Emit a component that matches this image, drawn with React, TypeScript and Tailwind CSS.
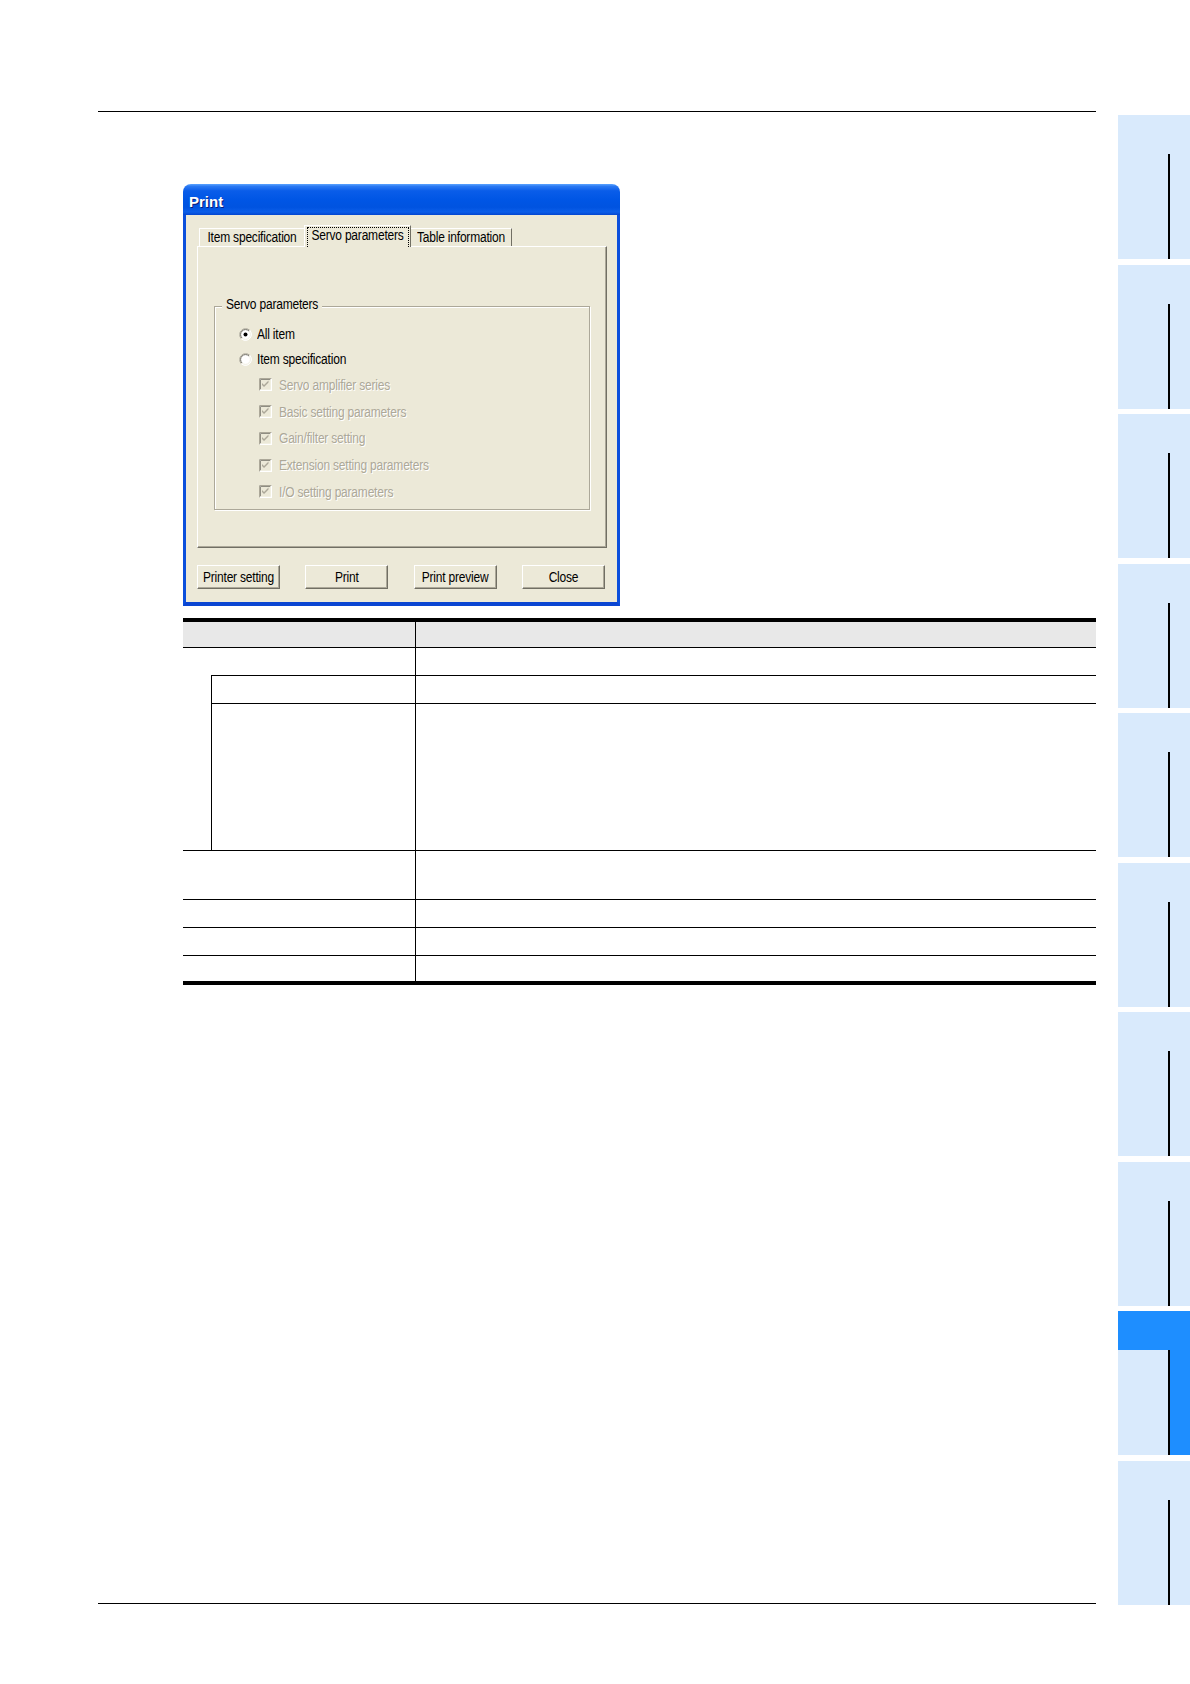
import React from "react";

const disabledText = "text-[#aca899] [text-shadow:1px_1px_0_#ffffff]";

function Label({ children, className = "" }: { children: React.ReactNode; className?: string }) {
  return (
    <span className={`inline-block origin-center scale-y-[1.15] whitespace-nowrap text-[12px] leading-[12px] tracking-[-0.2px] ${className}`}>
      {children}
    </span>
  );
}

function Radio({ checked }: { checked?: boolean }) {
  return (
    <svg width="13" height="13" viewBox="0 0 13 13" className="shrink-0">
      <circle cx="6.5" cy="6.5" r="6" fill="#ffffff" />
      <path d="M2.26 10.74 A6 6 0 0 1 10.74 2.26" stroke="#aca899" strokeWidth="1" fill="none" />
      <path d="M3.0 10.0 A4.95 4.95 0 0 1 10.0 3.0" stroke="#716f64" strokeWidth="1" fill="none" />
      <path d="M10.74 2.26 A6 6 0 0 1 2.26 10.74" stroke="#ffffff" strokeWidth="1" fill="none" />
      <path d="M10.0 3.0 A4.95 4.95 0 0 1 3.0 10.0" stroke="#f1efe2" strokeWidth="1" fill="none" />
      {checked && <circle cx="6.5" cy="6.5" r="2" fill="#000000" />}
    </svg>
  );
}

function DisabledCheck() {
  return (
    <svg width="13" height="13" viewBox="0 0 13 13" className="shrink-0">
      <rect x="0" y="0" width="13" height="13" fill="#ffffff" />
      <path d="M0.5 12.5 V0.5 H12.5" stroke="#aca899" strokeWidth="1" fill="none" />
      <path d="M1.5 11.5 V1.5 H11.5" stroke="#8f8d82" strokeWidth="1" fill="none" />
      <path d="M1.5 11.5 H11.5 V1.5" stroke="#f1efe2" strokeWidth="1" fill="none" />
      <rect x="2" y="2" width="9" height="9" fill="#ece9d8" />
      <polygon points="3,5 5,7 9.5,2.5 9.5,4.5 5,9 3,7" fill="#aca899" />
    </svg>
  );
}

function Button({ children }: { children: React.ReactNode }) {
  return (
    <div className="flex h-[24px] w-[83px] items-center justify-center border-t border-l border-t-white border-l-white border-r border-b border-r-[#716f64] border-b-[#716f64] bg-[#ece9d8] shadow-[inset_-1px_-1px_0_#aca899] text-black">
      <Label>{children}</Label>
    </div>
  );
}

function Dialog() {
  const items = [
    "Servo amplifier series",
    "Basic setting parameters",
    "Gain/filter setting",
    "Extension setting parameters",
    "I/O setting parameters",
  ];
  return (
    <div className="flex h-[422px] w-[437px] flex-col font-['Liberation_Sans',Arial,sans-serif]">
      {/* title bar */}
      <div className="flex h-[31px] shrink-0 items-start rounded-t-[8px] bg-[linear-gradient(180deg,#5aa3ff_0%,#2a78f2_8%,#0a5de9_22%,#0056e5_50%,#0053e0_75%,#0b5ee9_90%,#0346d0_100%)] pl-[6px] pt-[10px]">
        <span className="text-[15px] font-bold leading-[15px] text-white [text-shadow:1px_1px_0_#0a1e7a]">Print</span>
      </div>
      {/* body */}
      <div className="flex flex-1 flex-col border-x-[3px] border-b-[4px] border-x-[#0b4fdc] border-b-[#0a45d2] bg-[#ece9d8] pl-[11px] pr-[10px] pt-[10px]">
        {/* tab strip */}
        <div className="flex h-[21px] items-end pl-[2px]">
          <div className="flex h-[18px] w-[105px] justify-center border-t border-l border-t-white border-l-white bg-[#ece9d8] pt-[3px] text-black">
            <Label>Item specification</Label>
          </div>
          <div className="relative z-10 -mb-px flex h-[22px] w-[107px] flex-col border-t border-l border-r border-t-white border-l-white border-r-[#716f64] bg-[#ece9d8] px-[1.5px] pt-[1px]">
            <div className="flex flex-1 justify-center border border-b-0 border-dotted border-black pt-[1.5px] text-black">
              <Label>Servo parameters</Label>
            </div>
          </div>
          <div className="flex h-[18px] w-[101px] justify-center border-t border-r border-t-white border-r-[#716f64] bg-[#ece9d8] pt-[3px] text-black">
            <Label>Table information</Label>
          </div>
        </div>
        {/* tab panel */}
        <div className="h-[302px] border-t border-l border-t-white border-l-white border-r border-b border-r-[#716f64] border-b-[#716f64] shadow-[inset_-1px_-1px_0_#aca899] pl-[16px] pt-[59px]">
          <div className="relative flex h-[204px] w-[376px] flex-col border border-[#aca899] shadow-[inset_1px_1px_0_#ffffff,1px_1px_0_#ffffff] pt-[14.5px]">
            <div className="absolute -top-[9px] left-[7px] flex bg-[#ece9d8] px-[4px] text-black">
              <Label>Servo parameters</Label>
            </div>
            <div className="flex h-[25px] items-center gap-[5px] pl-[24px] text-black">
              <Radio checked />
              <Label>All item</Label>
            </div>
            <div className="flex h-[25px] items-center gap-[5px] pl-[24px] text-black">
              <Radio />
              <Label>Item specification</Label>
            </div>
            {items.map((t) => (
              <div key={t} className="flex h-[26.75px] items-center gap-[7px] pl-[44px]">
                <DisabledCheck />
                <Label className={disabledText}>{t}</Label>
              </div>
            ))}
          </div>
        </div>
        {/* buttons */}
        <div className="mt-[17px] flex w-[408px] justify-between">
          <Button>Printer setting</Button>
          <Button>Print</Button>
          <Button>Print preview</Button>
          <Button>Close</Button>
        </div>
      </div>
    </div>
  );
}

function Table() {
  return (
    <div className="ml-[85px] mt-[12px] flex w-[913px] flex-col border-t-[4px] border-b-[4px] border-black">
      <div className="flex h-[25px] bg-[#e8e8e8]">
        <div className="w-[233px] border-r border-black" />
        <div className="flex-1" />
      </div>
      <div className="flex h-[28px] border-t border-black">
        <div className="w-[233px] border-r border-black" />
        <div className="flex-1" />
      </div>
      <div className="flex">
        <div className="w-[28px]" />
        <div className="flex flex-1 flex-col">
          <div className="flex h-[28px] border-t border-black">
            <div className="w-[205px] border-l border-r border-black" />
            <div className="flex-1" />
          </div>
          <div className="flex h-[147px] border-t border-black">
            <div className="w-[205px] border-l border-r border-black" />
            <div className="flex-1" />
          </div>
        </div>
      </div>
      <div className="flex h-[49px] border-t border-black">
        <div className="w-[233px] border-r border-black" />
        <div className="flex-1" />
      </div>
      <div className="flex h-[28px] border-t border-black">
        <div className="w-[233px] border-r border-black" />
        <div className="flex-1" />
      </div>
      <div className="flex h-[28px] border-t border-black">
        <div className="w-[233px] border-r border-black" />
        <div className="flex-1" />
      </div>
      <div className="flex h-[26px] border-t border-black">
        <div className="w-[233px] border-r border-black" />
        <div className="flex-1" />
      </div>
    </div>
  );
}

function SideTab({ active }: { active?: boolean }) {
  return (
    <div className="flex h-[144px] w-[72px] flex-col bg-[#d9eafc]">
      <div className={`h-[39px] ${active ? "bg-[#1e8eff]" : ""}`} />
      <div className="flex flex-1">
        <div className="w-[50px]" />
        <div className="w-[2px] bg-black" />
        <div className={`flex-1 ${active ? "bg-[#1e8eff]" : ""}`} />
      </div>
    </div>
  );
}

export default function App() {
  const tabs = Array.from({ length: 10 }, (_, i) => i);
  return (
    <div className="flex h-[1684px] w-[1190px] overflow-hidden bg-white">
      <div className="flex w-[1118px] flex-col pl-[98px] pt-[111px]">
        <div className="h-px w-[998px] bg-black" />
        <div className="ml-[85px] mt-[72px]">
          <Dialog />
        </div>
        <Table />
        <div className="mb-[80px] mt-auto h-px w-[998px] bg-black" />
      </div>
      <div className="flex w-[72px] flex-col gap-[5.5px] pt-[115px]">
        {tabs.map((i) => (
          <SideTab key={i} active={i === 8} />
        ))}
      </div>
    </div>
  );
}
